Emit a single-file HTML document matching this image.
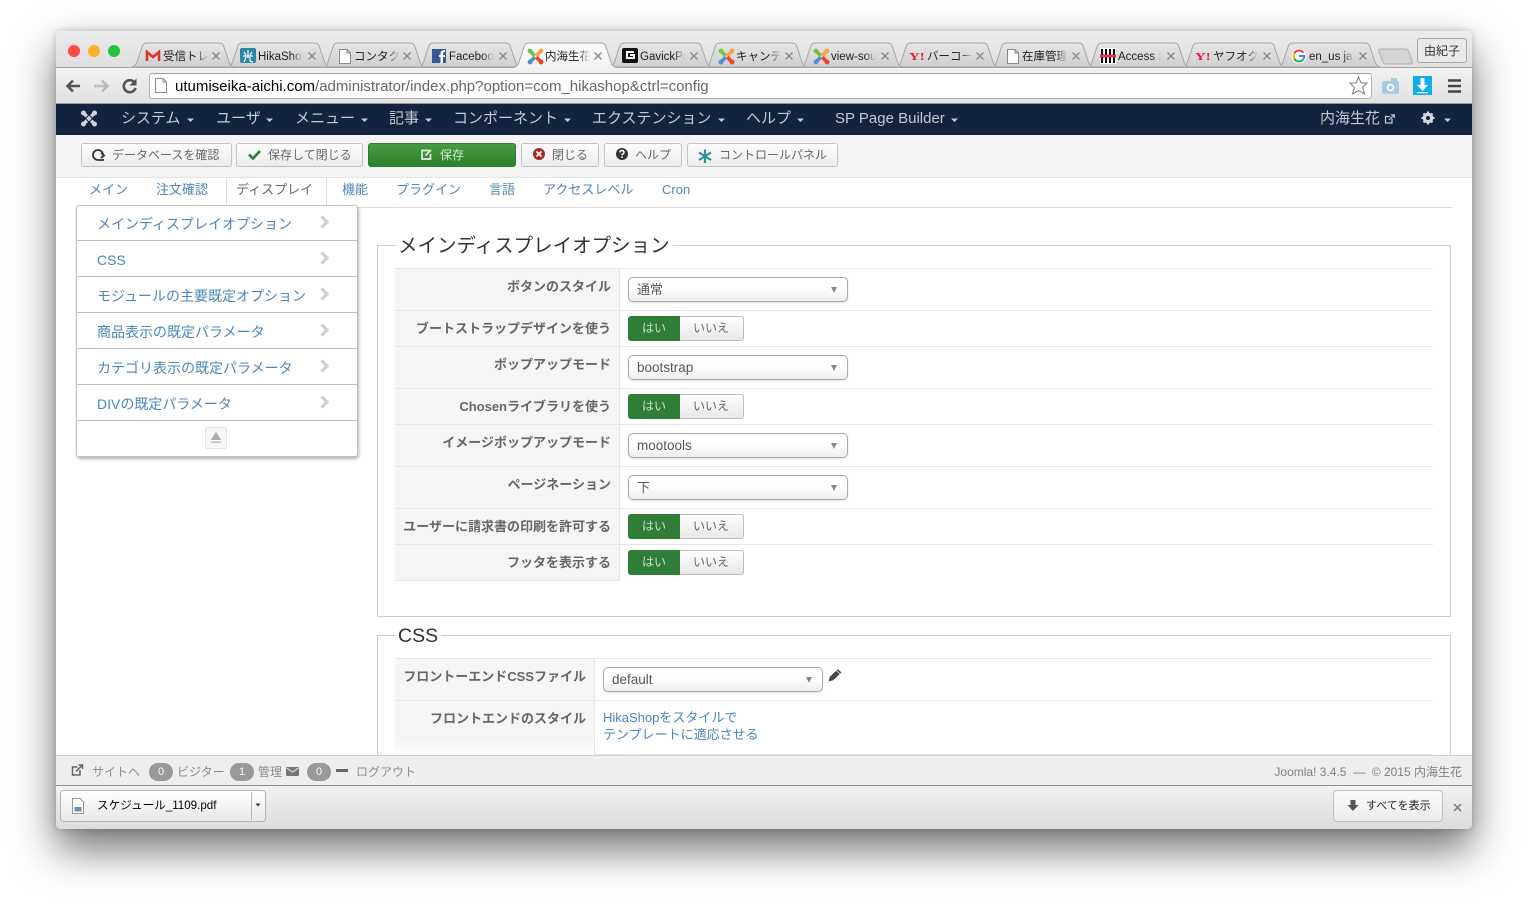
<!DOCTYPE html>
<html lang="ja"><head><meta charset="utf-8"><title>HikaShop config</title>
<style>
html,body{margin:0;padding:0;width:1528px;height:909px;overflow:hidden;background:#fff}
body{font-family:"Liberation Sans","Noto Sans CJK JP",sans-serif;position:relative}
.a{position:absolute;white-space:nowrap;line-height:20px}
.b{position:absolute;box-sizing:border-box}
.tab{font-size:11.5px;width:45px;overflow:hidden;color:#222;top:47px;-webkit-mask-image:linear-gradient(90deg,#000 75%,transparent);mask-image:linear-gradient(90deg,#000 75%,transparent)}
.nav{font-size:15px;color:#c4c9d2;top:109px}
.btn{position:absolute;top:143px;height:24px;box-sizing:border-box;border:1px solid #c4c4c4;border-radius:3px;background:linear-gradient(#fdfdfd,#ececec)}
.bt{font-size:12px;color:#666;top:145px}
.tb{font-size:13px;color:#4f86b8;top:180px}
.sl{font-size:14px;color:#4a86bd;left:97px}
.hr{position:absolute;left:77px;width:280px;height:1px;background:#bdbdbd}
.lab{font-size:13px;font-weight:bold;color:#666;text-align:right}
.sel{position:absolute;box-sizing:border-box;width:220px;height:25px;left:628px;border:1px solid #aaa;border-radius:5px;background:linear-gradient(#fff 0,#fff 45%,#eee 100%);box-shadow:0 1px 2px rgba(0,0,0,.12)}
.sv{font-size:13.5px;color:#555;left:637px}
.arr{position:absolute;width:0;height:0;border-left:3.5px solid transparent;border-right:3.5px solid transparent;border-top:6px solid #888}
.yes{position:absolute;left:628px;width:52px;height:25px;background:#2f7d36;border-radius:3px 0 0 3px;box-sizing:border-box}
.no{position:absolute;left:680px;width:64px;height:25px;box-sizing:border-box;border:1px solid #bdbdbd;border-left:0;border-radius:0 3px 3px 0;background:linear-gradient(#fff,#e8e8e8)}
.yt{font-size:12px;color:#cfe3d0;left:642px}
.nt{font-size:12px;color:#666;left:693px}
.ln{position:absolute;height:1px;background:#e6e6e6}
.ft{font-size:12px;color:#8c8c8c;top:762px}
.bd{position:absolute;top:763px;width:24px;height:18px;border-radius:9px;background:#999;color:#fff;font-size:11px;line-height:18px;text-align:center}
.yh{font:bold 11px/20px "Liberation Serif",serif;color:#f0143c;top:47px;transform:scaleX(1.35);transform-origin:left center}
svg{position:absolute;left:0;top:0}
</style></head><body>

<div class="b" style="left:56px;top:31px;width:1416px;height:798px;border-radius:5px;background:#fff;box-shadow:0 20px 42px rgba(0,0,0,.56),0 0 8px rgba(0,0,0,.2)"></div>
<div class="b" style="left:56px;top:31px;width:1416px;height:37px;border-radius:5px 5px 0 0;background:linear-gradient(#ececec,#dedede)"></div>
<div class="b" style="left:56px;top:67px;width:1416px;height:37px;background:linear-gradient(#f2f2f2,#e2e2e2);border-top:1px solid #a4a4a4;border-bottom:1px solid #999"></div>
<div class="b" style="left:149px;top:73px;width:1223px;height:26px;background:#fff;border:1px solid #b4b4b4;border-top-color:#9c9c9c;border-radius:3px"></div>

<svg width="1528" height="909" viewBox="0 0 1528 909">
<defs>
<linearGradient id="ti" x1="0" y1="0" x2="0" y2="1"><stop offset="0" stop-color="#e6e6e6"/><stop offset="1" stop-color="#cfcfcf"/></linearGradient>
<linearGradient id="ta" x1="0" y1="0" x2="0" y2="1"><stop offset="0" stop-color="#fbfbfb"/><stop offset="1" stop-color="#f2f2f2"/></linearGradient>
<symbol id="tabi" width="104" height="25" viewBox="0 0 104 25" overflow="visible"><path d="M0,24 C3,24 5,22 6,19 L11,4 C12,1 13,0 16,0 L88,0 C91,0 92,1 93,4 L98,19 C99,22 101,24 104,24Z" fill="url(#ti)" stroke="#a6a6a6"/></symbol>
<symbol id="joom" width="17" height="17" viewBox="0 0 17 17">
<path d="M3.500 3.500L7.800 7.800" stroke="#7ac143" stroke-width="3.600" fill="none"/><path d="M13.500 3.500L9.200 7.800" stroke="#f9a541" stroke-width="3.600" fill="none"/>
<path d="M13.500 13.500L9.200 9.200" stroke="#f44321" stroke-width="3.600" fill="none"/><path d="M3.500 13.500L7.800 9.200" stroke="#5091cd" stroke-width="3.600" fill="none"/>
<circle cx="3" cy="3" r="2.400" fill="#7ac143"/><circle cx="14" cy="3" r="2.400" fill="#f9a541"/><circle cx="14" cy="14" r="2.400" fill="#f44321"/><circle cx="3" cy="14" r="2.400" fill="#5091cd"/></symbol>
<symbol id="page" width="12" height="15" viewBox="0 0 12 15"><path d="M.5.5H8L11.5 4V14.5H.5Z M8 .5V4H11.5" fill="#fff" stroke="#8a8a8a"/></symbol>
<symbol id="cl" width="8" height="8" viewBox="0 0 8 8"><path d="M.5.5L7.5 7.5M7.5.5L.5 7.5" stroke="#8a8a8a" stroke-width="1.4"/></symbol>
</defs>
<circle cx="74" cy="51" r="6" fill="#fc4b45"/><circle cx="94" cy="51" r="6" fill="#fdb32b"/><circle cx="114" cy="51" r="6" fill="#27c13f"/>

<path d="M1381,49 h24 q3,0 4,3 l3,9 q1,3 -2,3 h-24 q-2,0 -3,-2 l-4,-10 q-1,-3 2,-3z" fill="#d4d4d4" stroke="#b0b0b0"/>
<use href="#tabi" x="1277" y="43"/><use href="#tabi" x="1181.5" y="43"/><use href="#tabi" x="1086" y="43"/><use href="#tabi" x="990.5" y="43"/><use href="#tabi" x="895" y="43"/><use href="#tabi" x="799.5" y="43"/><use href="#tabi" x="704" y="43"/><use href="#tabi" x="608.5" y="43"/>
<use href="#tabi" x="417.5" y="43"/><use href="#tabi" x="322" y="43"/><use href="#tabi" x="226.5" y="43"/><use href="#tabi" x="131" y="43"/>
<path d="M513,68 C516,68 518,66 519,62 L524,47 C525,44 526,43 529,43 L601,43 C604,43 605,44 606,47 L611,62 C612,66 614,68 617,68Z" fill="url(#ta)"/>
<path d="M513,67 C516,67 518,66 519,62 L524,47 C525,44 526,43 529,43 L601,43 C604,43 605,44 606,47 L611,62 C612,66 614,67 617,67" fill="none" stroke="#a6a6a6"/>

<use href="#cl" x="212" y="52"/><use href="#cl" x="308" y="52"/><use href="#cl" x="403" y="52"/><use href="#cl" x="499" y="52"/><use href="#cl" x="594" y="52"/><use href="#cl" x="690" y="52"/><use href="#cl" x="785" y="52"/><use href="#cl" x="881" y="52"/><use href="#cl" x="976" y="52"/><use href="#cl" x="1072" y="52"/><use href="#cl" x="1167" y="52"/><use href="#cl" x="1263" y="52"/><use href="#cl" x="1359" y="52"/>

<!-- favicons -->
<path d="M147,61V52L153,57L159,52V61" fill="none" stroke="#d8382c" stroke-width="2.600"/>
<rect x="240" y="48" width="16" height="15" rx="2" fill="#2b87a6"/><path d="M248,50V58M244,52l2,3M252,52l-2,3M243,56H253M246,57l-2,5M250,57v3q0,2 3,2" stroke="#fff" stroke-width="1.200" fill="none"/>
<use href="#page" x="339" y="49"/>
<rect x="432" y="49" width="14" height="14" fill="#3b5998"/><path d="M443,63V57H445V55H443V53.500Q443,52 445,52V50Q440.500,50 440.500,53.500V55H439V57H440.500V63" fill="#fff"/>
<use href="#joom" x="527" y="48"/>
<rect x="622" y="48" width="16" height="15" rx="2" fill="#111"/><path d="M634,52H627V58H634V55H630" fill="none" stroke="#fff" stroke-width="2"/>
<use href="#joom" x="718" y="48"/><use href="#joom" x="813" y="48"/>
<use href="#page" x="1007" y="49"/>
<rect x="1100" y="48" width="16" height="16" fill="#fff"/><path d="M1102,49V63M1106,49V63M1110,49V63M1114,49V63" stroke="#000" stroke-width="2"/><rect x="1100" y="54.500" width="16" height="3" fill="#f0285a"/>
<circle cx="1299" cy="56" r="7.500" fill="#fff"/>
<path d="M1303.300,52.800A5.300,5.300 0 0 0 1294.200,53.500" fill="none" stroke="#ea4335" stroke-width="2"/><path d="M1294.200,53.500A5.300,5.300 0 0 0 1294.200,58.500" fill="none" stroke="#fbbc05" stroke-width="2"/><path d="M1294.200,58.500A5.300,5.300 0 0 0 1302.800,59.800" fill="none" stroke="#34a853" stroke-width="2"/><path d="M1302.800,59.800Q1304.500,58 1304.300,56H1299" fill="none" stroke="#4285f4" stroke-width="2"/>

<!-- toolbar icons -->
<path d="M80,86H68M73,80.500L67.500,86L73,91.500" fill="none" stroke="#555" stroke-width="2.600"/>
<path d="M94,86H107M102,80.500L107.500,86L102,91.500" fill="none" stroke="#bcbcbc" stroke-width="2.600"/>
<path d="M134.500,82.500A6,6 0 1 0 135.500,88" fill="none" stroke="#555" stroke-width="2.600"/><path d="M136.500,78.500V85.500H129.500Z" fill="#555"/>
<use href="#page" x="155" y="78"/>
<path d="M1358.500,77L1361,83H1367L1362.500,87.500L1364.500,94L1358.500,90.500L1352.500,94L1354.500,87.500L1350,83H1356Z" fill="#fff" stroke="#888" stroke-width="1.100"/>
<rect x="1382" y="81" width="17" height="13" rx="2" fill="#a6cbe6"/><rect x="1391" y="78" width="6" height="4" fill="#a6cbe6"/><circle cx="1390.500" cy="87.500" r="3.800" fill="#fff"/><circle cx="1390.500" cy="87.500" r="2.200" fill="#a6cbe6"/>
<rect x="1413" y="76" width="19" height="19" fill="#10aeea"/><path d="M1420.500,78H1424.500V85H1428L1422.500,91L1417,85H1420.500Z" fill="#fff"/><rect x="1417" y="92" width="11" height="1.300" fill="#fff"/>
<path d="M1448,80.500H1461M1448,86H1461M1448,91.500H1461" stroke="#444" stroke-width="2.600"/>
</svg>

<div class="a tab" style="left:163px">受信トレイ</div>
<div class="a tab" style="left:258px">HikaShop</div>
<div class="a tab" style="left:354px">コンタクト</div>
<div class="a tab" style="left:449px">Facebook</div>
<div class="a tab" style="left:545px">内海生花</div>
<div class="a tab" style="left:640px">GavickPro</div>
<div class="a tab" style="left:736px">キャンデ</div>
<div class="a tab" style="left:831px">view-source</div>
<div class="a yh" style="left:909px">Y!</div>
<div class="a tab" style="left:927px">バーコード</div>
<div class="a tab" style="left:1022px">在庫管理</div>
<div class="a tab" style="left:1118px">Access :</div>
<div class="a yh" style="left:1195px">Y!</div>
<div class="a tab" style="left:1213px">ヤフオク</div>
<div class="a tab" style="left:1309px">en_us ja</div>
<div class="b" style="left:1417px;top:38px;width:50px;height:25px;border:1px solid #a8a8a8;border-radius:3px;background:#e9e9e9"></div>
<div class="a" style="left:1424px;top:41px;font-size:12px;color:#333">由紀子</div>

<div class="a" style="left:175px;top:77px;font-size:15px;color:#666"><span style="color:#000">utumiseika-aichi.com</span>/administrator/index.php?option=com_hikashop&amp;ctrl=config</div>

<!-- navbar -->
<div class="b" style="left:56px;top:104px;width:1416px;height:31px;background:#12233f"></div>
<svg width="1528" height="909" viewBox="0 0 1528 909" style="z-index:1">
<path d="M84,113.500L94,123.500M94,113.500L84,123.500" stroke="#cfd3da" stroke-width="3.400"/><path d="M89,114.800L92.700,118.500L89,122.200L85.300,118.500Z" fill="none" stroke="#12233f" stroke-width="1"/>
<circle cx="83.500" cy="113" r="2.500" fill="#cfd3da"/><circle cx="94.500" cy="113" r="2.500" fill="#cfd3da"/><circle cx="83.500" cy="124" r="2.500" fill="#cfd3da"/><circle cx="94.500" cy="124" r="2.500" fill="#cfd3da"/>
<path d="M187,118.500h7l-3.500,3.500zM266,118.500h7l-3.500,3.500zM361,118.500h7l-3.500,3.500zM425,118.500h7l-3.500,3.500zM564,118.500h7l-3.500,3.500zM718,118.500h7l-3.500,3.500zM797,118.500h7l-3.500,3.500zM951,118.500h7l-3.500,3.500zM1444,118.500h7l-3.500,3.500z" fill="#c4c9d2"/>
<path d="M1392,118.500V123H1385.500V116.500H1390M1389,120L1394,115M1391,114.800H1394.300V118" fill="none" stroke="#c4c9d2" stroke-width="1.200"/>
<circle cx="1428" cy="118" r="3.800" fill="none" stroke="#d5d8de" stroke-width="3"/><path d="M1428,111.500V124.500M1421.500,118H1434.500M1423.500,113.500L1432.500,122.500M1432.500,113.500L1423.500,122.500" stroke="#d5d8de" stroke-width="2.200"/><circle cx="1428" cy="118" r="2" fill="#12233f"/>
</svg>
<div style="position:relative;z-index:2">
<div class="a nav" style="left:121px">システム</div>
<div class="a nav" style="left:216px">ユーザ</div>
<div class="a nav" style="left:295px">メニュー</div>
<div class="a nav" style="left:389px">記事</div>
<div class="a nav" style="left:453px">コンポーネント</div>
<div class="a nav" style="left:592px">エクステンション</div>
<div class="a nav" style="left:746px">ヘルプ</div>
<div class="a nav" style="left:835px">SP Page Builder</div>
<div class="a nav" style="left:1320px">内海生花</div>
</div>

<!-- subhead -->
<div class="b" style="left:56px;top:135px;width:1416px;height:43px;background:#f3f3f3;border-bottom:1px solid #e2e2e2"></div>
<div class="btn" style="left:81px;width:151px"></div>
<div class="btn" style="left:236px;width:127px"></div>
<div class="btn" style="left:368px;width:148px;background:linear-gradient(#479c41,#2c7f2d);border-color:#2f7d30"></div>
<div class="btn" style="left:521px;width:78px"></div>
<div class="btn" style="left:604px;width:78px"></div>
<div class="btn" style="left:687px;width:151px"></div>
<div class="a bt" style="left:112px">データベースを確認</div>
<div class="a bt" style="left:268px">保存して閉じる</div>
<div class="a bt" style="left:440px;color:#d3e6d1">保存</div>
<div class="a bt" style="left:552px">閉じる</div>
<div class="a bt" style="left:635px">ヘルプ</div>
<div class="a bt" style="left:719px">コントロールパネル</div>
<svg width="1528" height="909" viewBox="0 0 1528 909" style="z-index:1">
<path d="M103,155A5,5 0 1 0 98,160H104M101,153L104,155.500L101,158" fill="none" stroke="#333" stroke-width="1.800"/>
<path d="M249,154.500L253,158.500L260,151" fill="none" stroke="#2d7d33" stroke-width="2.600"/>
<path d="M430,150.500H422V159H430.500V154M425.500,155.500L431,150" fill="none" stroke="#e4f0e2" stroke-width="1.700"/>
<circle cx="539" cy="154" r="6" fill="#a82b24"/><path d="M536.500,151.500L541.500,156.500M541.500,151.500L536.500,156.500" stroke="#fff" stroke-width="1.800"/>
<circle cx="622" cy="154" r="6" fill="#333"/><path d="M620,152.500Q620,150.500 622,150.500Q624,150.500 624,152.500Q624,153.700 622,154.500V155.300M622,156.300V158" stroke="#fff" stroke-width="1.400" fill="none"/>
<path d="M705,149.500V163M699,152.500L711,160M711,152.500L699,160" stroke="#2f8f9b" stroke-width="2.200" fill="none"/>
</svg>

<!-- tabs row -->
<div class="a tb" style="left:89px">メイン</div>
<div class="a tb" style="left:156px">注文確認</div>
<div class="a tb" style="left:236px;color:#666">ディスプレイ</div>
<div class="a tb" style="left:342px">機能</div>
<div class="a tb" style="left:396px">プラグイン</div>
<div class="a tb" style="left:489px">言語</div>
<div class="a tb" style="left:543px">アクセスレベル</div>
<div class="a tb" style="left:662px">Cron</div>
<div class="b" style="left:226px;top:178px;width:1px;height:29px;background:#ddd"></div>
<div class="b" style="left:326px;top:178px;width:1px;height:30px;background:#ddd"></div>
<div class="b" style="left:326px;top:207px;width:1126px;height:1px;background:#ddd"></div>

<!-- side panel -->
<div class="b" style="left:76px;top:205px;width:282px;height:252px;background:#fff;border:1px solid #c2c2c2;border-radius:3px;box-shadow:1px 2px 3px rgba(0,0,0,.3)"></div>
<div class="hr" style="top:240px"></div><div class="hr" style="top:276px"></div><div class="hr" style="top:312px"></div><div class="hr" style="top:348px"></div><div class="hr" style="top:384px"></div><div class="hr" style="top:420px"></div>
<div class="a sl" style="top:214px">メインディスプレイオプション</div>
<div class="a sl" style="top:250px">CSS</div>
<div class="a sl" style="top:286px">モジュールの主要既定オプション</div>
<div class="a sl" style="top:322px">商品表示の既定パラメータ</div>
<div class="a sl" style="top:358px">カテゴリ表示の既定パラメータ</div>
<div class="a sl" style="top:394px">DIVの既定パラメータ</div>
<svg width="1528" height="909" viewBox="0 0 1528 909" style="z-index:1">
<path d="M321.500,216.500L327,222L321.500,227.500M321.500,252.500L327,258L321.500,263.500M321.500,288.500L327,294L321.500,299.500M321.500,324.500L327,330L321.500,335.500M321.500,360.500L327,366L321.500,371.500M321.500,396.500L327,402L321.500,407.500" fill="none" stroke="#cfcfcf" stroke-width="3.200"/>
<rect x="205.500" y="427.500" width="21" height="21" rx="2" fill="#f6f6f6" stroke="#e2e2e2"/>
<path d="M216,432L221,440H211Z" fill="#aaa"/><rect x="211" y="441.500" width="10" height="1.500" fill="#bbb"/>
</svg>

<!-- fieldset 1 -->
<div class="b" style="left:377px;top:245px;width:1074px;height:372px;border:1px solid #ccc"></div>
<div class="b" style="left:396px;top:236px;width:277px;height:20px;background:#fff"></div>
<div class="a" style="left:398px;top:236px;font-size:19.500px;color:#333">メインディスプレイオプション</div>

<div class="b" style="left:395px;top:268px;width:224px;height:313px;background:#f5f5f5"></div>
<div class="b" style="left:619px;top:268px;width:1px;height:313px;background:#e6e6e6"></div>
<div class="ln" style="left:395px;width:1038px;top:268px"></div>
<div class="ln" style="left:395px;width:1038px;top:310px"></div>
<div class="ln" style="left:395px;width:1038px;top:346px"></div>
<div class="ln" style="left:395px;width:1038px;top:388px"></div>
<div class="ln" style="left:395px;width:1038px;top:424px"></div>
<div class="ln" style="left:395px;width:1038px;top:466px"></div>
<div class="ln" style="left:395px;width:1038px;top:508px"></div>
<div class="ln" style="left:395px;width:1038px;top:544px"></div>
<div class="ln" style="left:395px;width:225px;top:580px"></div>

<div class="a lab" style="right:917px;top:277px">ボタンのスタイル</div>
<div class="a lab" style="right:917px;top:319px">ブートストラップデザインを使う</div>
<div class="a lab" style="right:917px;top:355px">ポップアップモード</div>
<div class="a lab" style="right:917px;top:397px">Chosenライブラリを使う</div>
<div class="a lab" style="right:917px;top:433px">イメージポップアップモード</div>
<div class="a lab" style="right:917px;top:475px">ページネーション</div>
<div class="a lab" style="right:917px;top:517px">ユーザーに請求書の印刷を許可する</div>
<div class="a lab" style="right:917px;top:553px">フッタを表示する</div>

<div class="sel" style="top:277px"></div><div class="arr" style="left:831px;top:287px"></div><div class="a sv" style="top:280px;font-size:13px">通常</div>
<div class="sel" style="top:355px"></div><div class="arr" style="left:831px;top:365px"></div><div class="a sv" style="top:358px">bootstrap</div>
<div class="sel" style="top:433px"></div><div class="arr" style="left:831px;top:443px"></div><div class="a sv" style="top:436px">mootools</div>
<div class="sel" style="top:475px"></div><div class="arr" style="left:831px;top:485px"></div><div class="a sv" style="top:478px;font-size:13px">下</div>

<div class="yes" style="top:316px"></div><div class="no" style="top:316px"></div><div class="a yt" style="top:318px">はい</div><div class="a nt" style="top:318px">いいえ</div>
<div class="yes" style="top:394px"></div><div class="no" style="top:394px"></div><div class="a yt" style="top:396px">はい</div><div class="a nt" style="top:396px">いいえ</div>
<div class="yes" style="top:514px"></div><div class="no" style="top:514px"></div><div class="a yt" style="top:516px">はい</div><div class="a nt" style="top:516px">いいえ</div>
<div class="yes" style="top:550px"></div><div class="no" style="top:550px"></div><div class="a yt" style="top:552px">はい</div><div class="a nt" style="top:552px">いいえ</div>

<!-- fieldset 2 -->
<div class="b" style="left:377px;top:635px;width:1074px;height:130px;border:1px solid #ccc;border-bottom:0"></div>
<div class="b" style="left:396px;top:626px;width:45px;height:20px;background:#fff"></div>
<div class="a" style="left:398px;top:626px;font-size:19.500px;color:#333">CSS</div>
<div class="b" style="left:395px;top:658px;width:199px;height:97px;background:linear-gradient(#f5f5f5 0,#f5f5f5 84%,#fff 100%)"></div>
<div class="b" style="left:594px;top:658px;width:1px;height:97px;background:#e6e6e6"></div>
<div class="ln" style="left:395px;width:1038px;top:658px"></div>
<div class="ln" style="left:395px;width:1038px;top:700px"></div>
<div class="ln" style="left:595px;width:838px;top:754px"></div>
<div class="a lab" style="right:942px;top:667px">フロントーエンドCSSファイル</div>
<div class="a lab" style="right:942px;top:709px">フロントエンドのスタイル</div>
<div class="sel" style="left:603px;top:667px"></div><div class="arr" style="left:806px;top:677px"></div>
<div class="a sv" style="left:612px;top:670px">default</div>
<div class="a" style="left:603px;top:708px;font-size:13px;color:#4a86bd">HikaShopをスタイルで</div>
<div class="a" style="left:603px;top:725px;font-size:13px;color:#4a86bd">テンプレートに適応させる</div>
<svg width="1528" height="909" viewBox="0 0 1528 909" style="z-index:1">
<path d="M829,681L830,677L838,669.500L841,672.500L833,680Z" fill="#444" stroke="#444" stroke-width=".6"/><path d="M836.500,670.500L839.800,673.800" stroke="#fff" stroke-width=".7"/>
</svg>

<!-- footer -->
<div class="b" style="left:56px;top:755px;width:1416px;height:31px;background:#eee;border-top:1px solid #d0d0d0;border-bottom:1px solid #8e8e8e;z-index:3"></div>
<div style="position:relative;z-index:4">
<svg width="1528" height="909" viewBox="0 0 1528 909">
<path d="M80,770V775H72.500V767H77.500M76,771.500L82,765.500M78.500,765H82.500V769" fill="none" stroke="#666" stroke-width="1.500"/>
<rect x="286" y="767" width="13" height="9" rx="1" fill="#777"/><path d="M286.500,768L292.500,772L298.500,768" fill="none" stroke="#eee" stroke-width="1"/>
<rect x="336" y="769" width="12" height="3" fill="#666"/>
</svg>
<div class="a ft" style="left:92px">サイトへ</div>
<div class="bd" style="left:149px">0</div>
<div class="a ft" style="left:177px">ビジター</div>
<div class="bd" style="left:230px">1</div>
<div class="a ft" style="left:258px">管理</div>
<div class="bd" style="left:307px">0</div>
<div class="a ft" style="left:356px">ログアウト</div>
<div class="a ft" style="right:66px;color:#808080">Joomla! 3.4.5 &nbsp;— &nbsp;© 2015 内海生花</div>
</div>

<!-- download bar -->
<div class="b" style="left:56px;top:786px;width:1416px;height:43px;background:linear-gradient(#f2f2f2,#dcdcdc);border-radius:0 0 5px 5px;z-index:3"></div>
<div style="position:relative;z-index:4">
<div class="b" style="left:60px;top:790px;width:206px;height:32px;border:1px solid #b4b4b4;border-radius:4px;background:linear-gradient(#fff,#e8e8e8)"></div>
<div class="b" style="left:251px;top:792px;width:1px;height:28px;background:#bbb"></div>
<div class="b" style="left:1333px;top:790px;width:110px;height:32px;border:1px solid #c0c0c0;border-radius:4px;background:linear-gradient(#fbfbfb,#ebebeb)"></div>
<svg width="1528" height="909" viewBox="0 0 1528 909">
<path d="M72.500,798.500H80L83.500,802V813.500H72.500Z" fill="#fff" stroke="#999"/><rect x="74.500" y="807" width="7" height="4.500" fill="#6a8fb8"/>
<path d="M255.500,803.500h5l-2.500,3z" fill="#333"/>
<path d="M1350.500,800H1355.500V805H1358.500L1353,811L1347.500,805H1350.500Z" fill="#555"/>
<path d="M1454,804L1461,811M1461,804L1454,811" stroke="#777" stroke-width="1.500"/>
</svg>
<div class="a" style="left:97px;top:796px;font-size:11.600px;color:#000">スケジュール_1109.pdf</div>
<div class="a" style="left:1366px;top:796px;font-size:11px;color:#222">すべてを表示</div>
</div>

</body></html>
